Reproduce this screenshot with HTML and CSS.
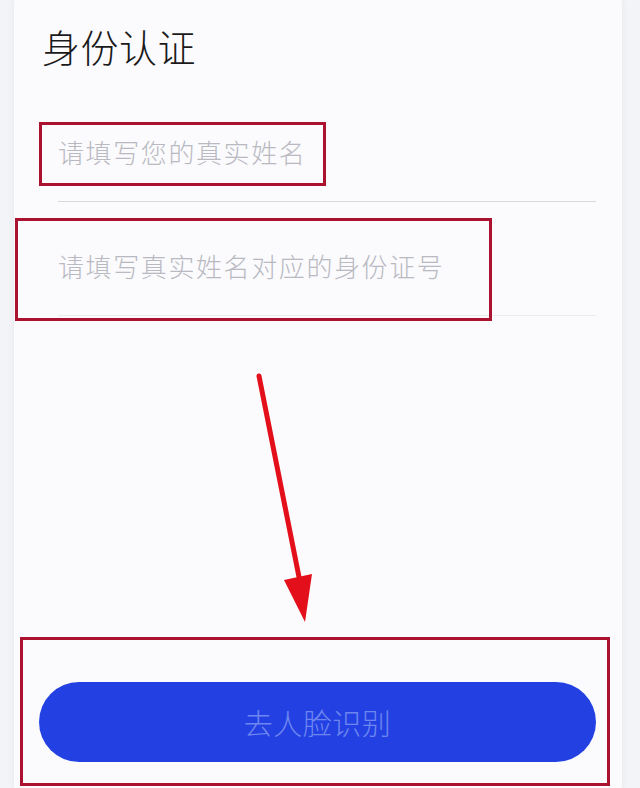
FILE: index.html
```html
<!DOCTYPE html>
<html lang="zh-CN">
<head>
<meta charset="utf-8">
<title>身份认证</title>
<link rel="stylesheet" href="styles.css">
</head>
<body>
<main class="page">
  <h1 class="title">身份认证</h1>
  <form class="form">
    <label class="field">
      <input class="input" type="text" placeholder="请填写您的真实姓名">
    </label>
    <label class="field">
      <input class="input" type="text" placeholder="请填写真实姓名对应的身份证号">
    </label>
  </form>
  <div class="spacer"></div>
  <button class="btn" type="button">去人脸识别</button>

  <div class="mark mark-name"></div>
  <div class="mark mark-id"></div>
  <div class="mark mark-btn"></div>
  <svg class="arrow" width="80" height="260" viewBox="0 0 80 260">
    <line x1="9" y1="6" x2="50" y2="212" stroke="#e30f1b" stroke-width="5" stroke-linecap="round"/>
    <polygon points="34,210 62,204 55,252" fill="#e30f1b"/>
  </svg>
</main>
</body>
</html>
```

FILE: styles.css
```css
html, body {
  margin: 0;
  padding: 0;
}
body {
  background: #f3f4f7;
  font-family: "Noto Sans CJK SC", "Noto Sans", sans-serif;
}
.page {
  position: relative;
  box-sizing: border-box;
  margin: 0 18px 0 14px;
  height: 788px;
  background: #fbfbfe;
  box-shadow: 0 0 6px rgba(220, 222, 230, 0.6);
  display: flex;
  flex-direction: column;
  padding: 0 0 26px;
}
.title {
  margin: 22px 0 0 28px;
  font-size: 38px;
  line-height: 48px;
  font-weight: 300;
  color: #1a1a1a;
  letter-spacing: 0.5px;
}
.form {
  display: flex;
  flex-direction: column;
  margin: 18px 26px 0 44px;
}
.field {
  display: flex;
  height: 113px;
  align-items: flex-start;
  border-bottom: 1px solid #d8d8de;
}
.field + .field {
  border-bottom-color: #ececf0;
}
.input {
  margin-top: 40px;
  width: 100%;
  height: 46px;
  padding: 0;
  border: 0;
  outline: none;
  background: transparent;
  font-family: "Noto Sans CJK SC", "Noto Sans", sans-serif;
  font-size: 26px;
  font-weight: 300;
  letter-spacing: 1.6px;
  color: #333;
}
.input::placeholder {
  color: #b9b9c1;
}
.spacer {
  flex: 1;
}
.btn {
  margin: 0 26px 0 25px;
  height: 80px;
  border: 0;
  border-radius: 40px;
  background: #2341e2;
  color: #6d86f0;
  font-family: "Noto Sans CJK SC", "Noto Sans", sans-serif;
  font-size: 29px;
  font-weight: 300;
  letter-spacing: 0.5px;
}
.mark {
  position: absolute;
  border: 3px solid #ab1230;
  box-sizing: border-box;
  pointer-events: none;
}
.mark-name {
  left: 25px;
  top: 122px;
  width: 287px;
  height: 64px;
}
.mark-id {
  left: 1px;
  top: 218px;
  width: 477px;
  height: 103px;
}
.mark-btn {
  left: 6px;
  top: 637px;
  width: 590px;
  height: 149px;
}
.arrow {
  position: absolute;
  left: 236px;
  top: 370px;
}
```
